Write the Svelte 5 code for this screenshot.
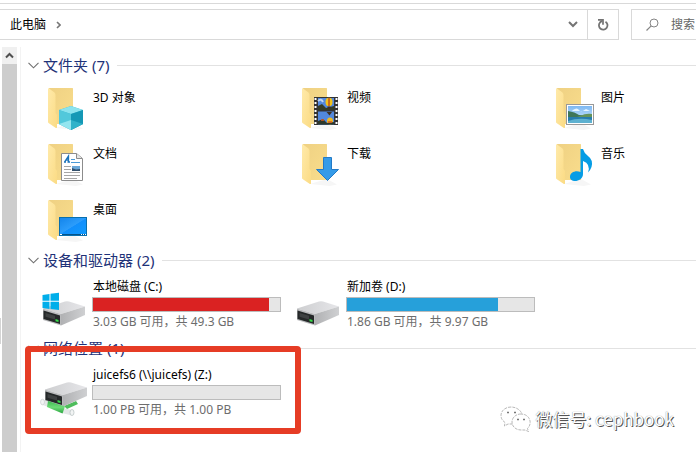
<script>
    const folders = [
        { name: '3D 对象', icon: 'objects' },
        { name: '视频', icon: 'videos' },
        { name: '图片', icon: 'pictures' },
        { name: '文档', icon: 'documents' },
        { name: '下载', icon: 'downloads' },
        { name: '音乐', icon: 'music' },
        { name: '桌面', icon: 'desktop' }
    ];

    const drives = [
        { name: '本地磁盘 (C:)', icon: 'system', used: 94, full: true, info: '3.03 GB 可用，共 49.3 GB' },
        { name: '新加卷 (D:)', icon: 'disk', used: 81, full: false, info: '1.86 GB 可用，共 9.97 GB' }
    ];

    const shares = [
        { name: 'juicefs6 (\\\\juicefs) (Z:)', icon: 'network', used: 0, full: false, info: '1.00 PB 可用，共 1.00 PB' }
    ];

    let open = $state({ folders: true, drives: true, shares: true });
</script>

<svelte:head>
    <title>此电脑</title>
</svelte:head>

{#snippet heading(key, label)}
    <h2>
        <button type="button" aria-expanded={open[key]} onclick={() => (open[key] = !open[key])}>
            <svg width="11" height="7" viewBox="0 0 11 7"><path d="M0.5 0.8 5.5 5.8 10.5 0.8" fill="none" stroke="#6f6f6f" stroke-width="1.1" /></svg>
            {label}
        </button>
    </h2>
{/snippet}

{#snippet folderIcon(kind)}
    <svg class="icon" width="48" height="48" viewBox="0 0 48 48" aria-hidden="true">
        <path d="M16 44 33 39 43 44.500 36 46Z" fill="#f6f6f6" />
        <path d="M9 4H32.500Q33 4 33 4.500V40H14Z" fill="url(#folder-back)" />
        <path d="M8 4.500Q8 4 9 4.400L14.500 8.500Q15.500 9.500 15.500 11V29L17 31V43.500Q16.500 44.500 15.500 43.800L8.500 39Q8 38.500 8 38Z" fill="url(#folder-front)" />
        {#if kind === 'objects'}
            <path d="M31 22 43 26V40L31 46 19 40V26Z" fill="#35b5cc" />
            <path d="M31 22 43 26 31 30 19 26Z" fill="#8be3ee" />
            <path d="M19 26 31 30V46L19 40Z" fill="#52c8db" />
            <path d="M31 30 43 26V40L31 46Z" fill="#1598b5" />
            <path d="M19 40 31 36V46Z" fill="#94e5ef" />
            <path d="M31 36 43 40 31 46Z" fill="#30b2c9" />
        {:else if kind === 'videos'}
            <g transform="translate(-4 0)">
                <rect x="24" y="13" width="24" height="28" fill="#333" />
                <path d="M25.500 14V41M46.500 14V41" stroke="#fff" stroke-width="2" stroke-dasharray="2 2" />
                <rect x="28" y="14" width="16" height="12" fill="#5288dd" />
                <rect x="28" y="27.500" width="16" height="13" fill="#5288dd" />
                <path d="M28 22 32 20 36 24 44 22V26H28Z" fill="#343c27" />
                <ellipse cx="39" cy="18" rx="3.500" ry="4.200" fill="#f1c21b" />
                <path d="M39 14V22" stroke="#b2371e" stroke-width="1.200" />
                <path d="M37.500 22.500H40.500V25H37.500Z" fill="#3f3023" />
                <path d="M28 17Q31 14 33 18" fill="none" stroke="#bdd4f3" stroke-width="2" />
                <path d="M36.500 28H42L39.500 31.500Z" fill="#3f3023" />
                <ellipse cx="40" cy="37" rx="3" ry="3.500" fill="#efb91d" />
                <path d="M28 37 33 35 37 39 44 38V40.500H28Z" fill="#2d3829" />
                <path d="M31 36H34M38 38H42" stroke="#d95a22" stroke-width="1.500" />
            </g>
        {:else if kind === 'pictures'}
            <rect x="18.500" y="20.500" width="27" height="20" fill="#fff" stroke="#999" />
            <rect x="20" y="22" width="24" height="17" fill="url(#sky)" />
            <path d="M25 26Q29 23 31 26T38 25L42 27H24Z" fill="#e8f5ff" />
            <path d="M20 27Q27 28 31 31L44 32V34H20Z" fill="#3f7659" />
            <path d="M32 32Q38 29 44 30V33H29Z" fill="#65935a" />
            <path d="M20 33H44V39H20Z" fill="#277cac" />
            <path d="M20 37Q31 33 44 36V39H20Z" fill="#5eb1d0" />
        {:else if kind === 'documents'}
            <path d="M21.500 13.500H36.500L42.500 18.500V40.500H21.500Z" fill="#fff" stroke="#8c8c8c" />
            <path d="M36.500 13.500V18.500H42" fill="#e6e6e6" stroke="#8c8c8c" />
            <path d="M24.500 22 28.500 16V22M26 20H29M24 22H26M27.500 22H30" fill="none" stroke="#1b73bb" stroke-width="1.300" />
            <path d="M31 19.500H35M31 22.500H40" stroke="#4b9ad6" />
            <path d="M24 26.500H31M24 29.500H31M24 32.500H40M24 35.500H40M24 38.500H37" stroke="#a6a6a6" />
            <rect x="32" y="26" width="8" height="5" fill="#6ca8d8" />
            <path d="M32 31V28L36 29.500 40 29V31Z" fill="#33506c" />
        {:else if kind === 'downloads'}
            <path d="M29.500 17.500H37.500V29.500H44.500L33.500 40.500 22.500 29.500H29.500Z" fill="#359be8" stroke="#237ac6" />
        {:else if kind === 'music'}
            <path d="M32.500 9H35Q36 13 40 16Q45.500 20 43.500 27Q42.500 30 40 32.500Q43 24 35 21V34C35 42 22 43.500 22 37C22 32 28 30 32.500 32Z" fill="#069de5" />
        {:else}
            <path d="M19 21H47V40H19Z" fill="#086fae" />
            <path d="M20 22H46V38H20Z" fill="url(#screen)" />
            <path d="M20 38.500H46" stroke="#04538a" />
            <path d="M20 38.500H22M41 38.500H42M43 38.500H44M45 38.500H46" stroke="#fff" />
        {/if}
    </svg>
{/snippet}

{#snippet driveBody()}
    <path d="M3 26.500 25 19.500Q27 19 29 19.500L45 24.500 21 32Z" fill="url(#drive-top)" />
    <path d="M21 32 45 24.500V33L21 43.500Z" fill="url(#drive-side)" />
    <path d="M3 26.500 21 32V43.500L3 38Z" fill="#b9babc" />
    <path d="M3.500 28.500 20 33.500V42L3.500 37Z" fill="#252829" />
    <path d="M5.500 31 15 33.800V37.500L5.500 34.700Z" fill="#3e4142" />
    <path d="M15.500 37 18.500 37.900V40L15.500 39.200Z" fill="#35dd48" />
{/snippet}

{#snippet driveIcon(kind)}
    <svg class="icon drive-icon" width="48" height="48" viewBox="0 0 48 48" aria-hidden="true">
        {#if kind === 'network'}
            <path d="M24 36 36 31 38 34 27 39Z" fill="#4fbd5c" />
            <g transform="translate(2 -7)">{@render driveBody()}</g>
            <path d="M2 29.500 8 31.500V37L1.500 34.500Z" fill="#e3e7e7" />
            <path d="M22 38 32 40 31.500 45.500 22 43Z" fill="#e3e7e7" />
            <path d="M8 31 25 36.500 22.500 43.500 7 37Z" fill="url(#cable)" />
            <ellipse cx="2.500" cy="32" rx="2" ry="2.800" fill="#f2f4f4" stroke="#c5cbcb" stroke-width="0.600" />
            <ellipse cx="32" cy="42.500" rx="2" ry="3" fill="#f2f4f4" stroke="#bbc4c4" stroke-width="0.800" />
        {:else}
            {@render driveBody()}
            {#if kind === 'system'}
                <path d="M2.500 13 9.500 12V18.700H2.500ZM10.500 11.800 19 10.700V18.700H10.500ZM2.500 19.800H9.500V27L2.500 26ZM10.500 19.800H19V28L10.500 27Z" fill="#00aeea" />
            {/if}
        {/if}
    </svg>
{/snippet}

{#snippet drive(item)}
    <li class="tile drive">
        {@render driveIcon(item.icon)}
        <div class="details">
            <span class="name">{item.name}</span>
            <div class="bar" role="meter" aria-label={item.name} aria-valuemin="0" aria-valuemax="100" aria-valuenow={item.used}>
                <div class="fill" class:full={item.full} style="width: {item.used}%"></div>
            </div>
            <span class="info">{item.info}</span>
        </div>
    </li>
{/snippet}

<svg class="defs" width="0" height="0" aria-hidden="true">
    <defs>
        <linearGradient id="folder-back" x1="0" y1="0" x2="1" y2="1">
            <stop offset="0" stop-color="#efd183" />
            <stop offset="1" stop-color="#f9dd8c" />
        </linearGradient>
        <linearGradient id="folder-front" x1="0" y1="0" x2="1" y2="1">
            <stop offset="0" stop-color="#ffeaaa" />
            <stop offset="1" stop-color="#fbdb84" />
        </linearGradient>
        <linearGradient id="sky" x1="0" y1="0" x2="0" y2="1">
            <stop offset="0" stop-color="#7db8f2" />
            <stop offset="1" stop-color="#d7ecfb" />
        </linearGradient>
        <linearGradient id="screen" x1="0" y1="0" x2="1" y2="1">
            <stop offset="0" stop-color="#1485eb" />
            <stop offset="0.5" stop-color="#2c9dfb" />
            <stop offset="0.52" stop-color="#128ffc" />
            <stop offset="1" stop-color="#109afe" />
        </linearGradient>
        <linearGradient id="drive-top">
            <stop offset="0" stop-color="#cdced0" />
            <stop offset="1" stop-color="#e6e6e9" />
        </linearGradient>
        <linearGradient id="drive-side">
            <stop offset="0" stop-color="#b0b1b3" />
            <stop offset="1" stop-color="#cfd0d2" />
        </linearGradient>
        <linearGradient id="cable" x1="0" y1="0" x2="0" y2="1">
            <stop offset="0" stop-color="#3cb850" />
            <stop offset="0.5" stop-color="#6ddb77" />
            <stop offset="1" stop-color="#2ba540" />
        </linearGradient>
    </defs>
</svg>

<div class="window">
    <header>
        <div class="address">
            <a href="#computer">此电脑</a>
            <svg width="5" height="8" viewBox="0 0 5 8"><path d="M1 1 4 4 1 7" fill="none" stroke="#777" stroke-width="1.600" /></svg>
            <button type="button" class="history" aria-label="以前的位置">
                <svg width="10" height="7" viewBox="0 0 10 7"><path d="M1 1 5 5 9 1" fill="none" stroke="#747474" stroke-width="2" /></svg>
            </button>
            <button type="button" class="refresh" aria-label="刷新">
                <svg width="12" height="12" viewBox="0 0 12 12">
                    <path d="M8.500 2.700A4.300 4.300 0 1 1 3 3.500L5 1.800" fill="none" stroke="#737373" stroke-width="1.800" />
                    <path d="M1 0.900H6V5.800" fill="none" stroke="#737373" stroke-width="1.700" />
                </svg>
            </button>
        </div>
        <label class="search">
            <svg width="13" height="13" viewBox="0 0 13 13">
                <circle cx="8" cy="5" r="4" fill="none" stroke="#858585" />
                <path d="M5.200 7.800 0.500 12.500" stroke="#858585" stroke-width="1.200" />
            </svg>
            <input type="text" placeholder="搜索" aria-label="搜索" />
        </label>
    </header>

    <div class="body">
        <div class="pane-edge"></div>
        <div class="scrollbar">
            <button type="button" aria-label="向上滚动">
                <svg width="9" height="7" viewBox="0 0 9 7"><path d="M1 5.500 4.500 2 8 5.500" fill="none" stroke="#505050" stroke-width="2" /></svg>
            </button>
            <div class="thumb"></div>
        </div>

        <main>
            <section>
                {@render heading('folders', '文件夹 (7)')}
                {#if open.folders}
                    <ul>
                        {#each folders as folder}
                            <li class="tile">
                                {@render folderIcon(folder.icon)}
                                <div class="details"><span class="name">{folder.name}</span></div>
                            </li>
                        {/each}
                    </ul>
                {/if}
            </section>
            <section>
                {@render heading('drives', '设备和驱动器 (2)')}
                {#if open.drives}
                    <ul>
                        {#each drives as item}
                            {@render drive(item)}
                        {/each}
                    </ul>
                {/if}
            </section>
            <section class="marked">
                {@render heading('shares', '网络位置 (1)')}
                {#if open.shares}
                    <ul>
                        {#each shares as item}
                            {@render drive(item)}
                        {/each}
                    </ul>
                {/if}
                <div class="marker"></div>
            </section>
        </main>
    </div>

    <div class="watermark">
        <svg width="31" height="26" viewBox="0 0 31 26" aria-hidden="true">
            <g fill="#fff" stroke="#999" stroke-width="0.700" stroke-dasharray="3 1">
                <path d="M11 1C5 1 1 5 1 9.500C1 13 3 15 5 16.500L4.500 20 8 18H12C19 18 22 14 22 9.500C22 5 17 1 11 1Z" />
                <path d="M21 8C15.500 8 12 12 12 16C12 20.500 16 24 21 24H25L28.500 25.500 27.500 22.500C33 17 29.500 8 21 8Z" />
            </g>
            <path d="M7 6.500H9M14 6.500H16M17 13.500H19M23 13.500H25" stroke="#777" stroke-width="1.300" />
        </svg>
        <span>微信号: cephbook</span>
    </div>
</div>

<style>
    :global(body) {
        margin: 0;
        background: #fff;
    }

    .window {
        position: relative;
        display: flex;
        flex-direction: column;
        min-height: 100vh;
        overflow: hidden;
        font-family: "Noto Sans", "Noto Sans CJK SC", sans-serif;
        font-size: 12px;
        line-height: 16px;
        color: #000;
    }

    .defs {
        position: absolute;
    }

    svg {
        display: block;
        flex: none;
    }

    button {
        display: flex;
        align-items: center;
        justify-content: center;
        margin: 0;
        padding: 0;
        border: 0;
        background: none;
        font: inherit;
        color: inherit;
    }

    header {
        display: flex;
        gap: 12px;
        margin-top: 3px;
        padding-top: 5px;
        border-top: 1px solid #d9d9d9;
    }

    .address {
        display: flex;
        flex: 1;
        align-items: center;
        box-sizing: border-box;
        height: 31px;
        padding-left: 10px;
        border: 1px solid #d9d9d9;
        border-left: 0;
    }

    .address a {
        margin-right: 10px;
        color: #000;
        text-decoration: none;
    }

    .history {
        width: 28px;
        height: 100%;
        margin-left: auto;
    }

    .refresh {
        width: 31px;
        height: 100%;
        border-left: 1px solid #d9d9d9;
    }

    .search {
        display: flex;
        align-items: center;
        gap: 12px;
        box-sizing: border-box;
        width: 65px;
        padding-left: 14px;
        border: 1px solid #d9d9d9;
        border-right: 0;
    }

    .search input {
        flex: 1;
        min-width: 0;
        padding: 0;
        border: 0;
        outline: 0;
        background: none;
        font: inherit;
    }

    .search input::placeholder {
        color: #666;
        opacity: 1;
    }

    .body {
        display: flex;
        flex: 1;
        padding-top: 7px;
    }

    .pane-edge {
        width: 1px;
        height: 26px;
        margin: 271px 1px 0 0;
        background: #d4d4d4;
    }

    .scrollbar {
        display: flex;
        flex-direction: column;
        width: 15px;
        margin-right: 3px;
        background: #f0f0f0;
    }

    .scrollbar button {
        height: 17px;
    }

    .thumb {
        flex: 1;
        background: #cdcdcd;
    }

    main {
        display: flex;
        flex: 1;
        flex-direction: column;
        gap: 2px;
        min-width: 0;
        padding-top: 8px;
        border-left: 1px solid #f3f3f3;
    }

    h2 {
        display: flex;
        align-items: center;
        gap: 8px;
        margin: 0 0 5px;
        padding-left: 7px;
        font-size: 15px;
        font-weight: 400;
        line-height: 20px;
        color: #1e3278;
    }

    h2::after {
        content: "";
        flex: 1;
        height: 1px;
        background: #e2e2e2;
    }

    h2 button {
        gap: 4px;
    }

    ul {
        display: grid;
        grid-template-columns: repeat(3, 254px);
        margin: 0;
        padding: 0 0 0 19px;
        list-style: none;
    }

    .tile {
        display: flex;
        gap: 4px;
        box-sizing: border-box;
        height: 56px;
    }

    .icon {
        margin-top: 4px;
    }

    .details {
        display: flex;
        flex-direction: column;
        width: 189px;
        padding-top: 10px;
    }

    .name,
    .info {
        padding-left: 1px;
        white-space: nowrap;
    }

    .drive {
        height: 61px;
    }

    .drive-icon {
        margin-top: 7px;
    }

    .drive .details {
        padding-top: 4px;
    }

    .bar {
        box-sizing: border-box;
        height: 15px;
        margin: 2px 0;
        border: 1px solid #bcbcbc;
        background: #e6e6e6;
    }

    .fill {
        height: 100%;
        background: #26a0da;
    }

    .fill.full {
        background: #da2222;
    }

    .info {
        color: #6d6d6d;
    }

    .marked {
        position: relative;
    }

    .marker {
        position: absolute;
        top: 8px;
        left: 4px;
        box-sizing: border-box;
        width: 276px;
        height: 88px;
        border: 6px solid #e63c25;
        border-radius: 4px;
        pointer-events: none;
    }

    .watermark {
        position: absolute;
        right: 22px;
        bottom: 20px;
        display: flex;
        align-items: center;
        gap: 4px;
        font-family: "Noto Sans CJK SC", sans-serif;
        font-size: 17px;
        line-height: 26px;
        color: #fff;
        text-shadow: 1px 1px 0 #555, 0 0 1px #777;
    }
</style>
